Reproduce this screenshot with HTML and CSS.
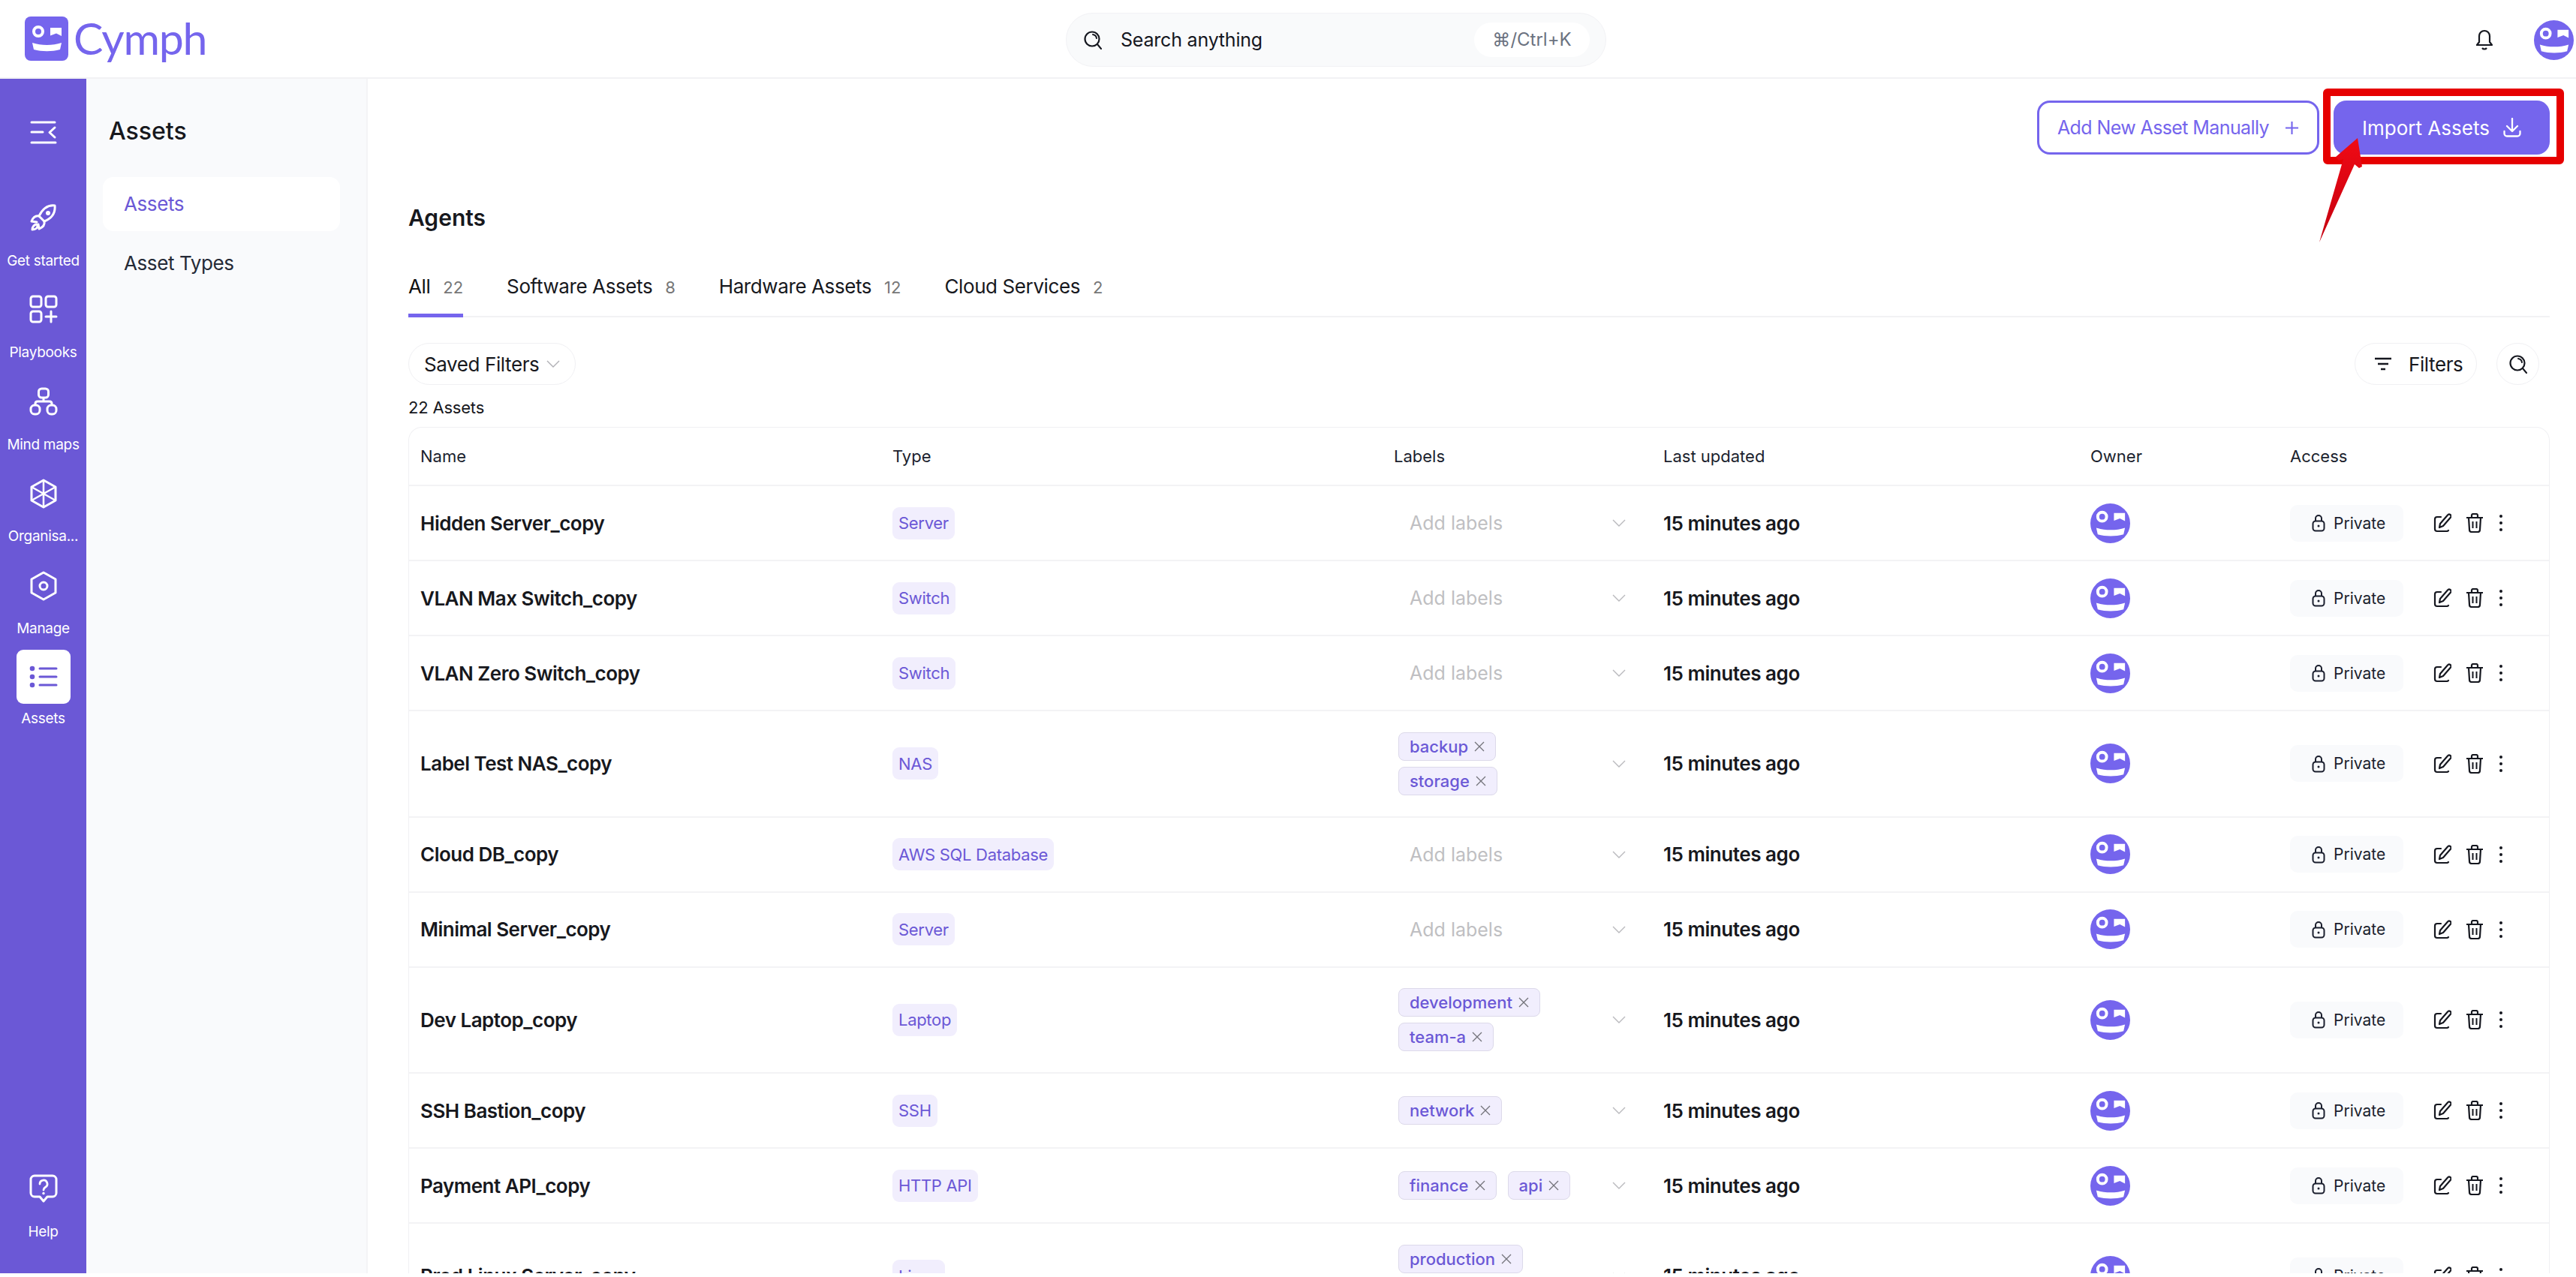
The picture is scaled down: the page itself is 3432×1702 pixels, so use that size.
FILE: index.html
```html
<!DOCTYPE html>
<html lang="en">
<head>
<meta charset="utf-8">
<title>Cymph Assets</title>
<link rel="stylesheet" href="styles.css">
</head>
<body>
<svg class="defs" width="0" height="0" aria-hidden="true">
  <symbol id="face" viewBox="0 0 54 54">
    <circle cx="16" cy="18" r="6" fill="none" stroke="#fff" stroke-width="4"/>
    <path d="M32 13h15v11l-7-3.5-8 3z" fill="#fff"/>
    <path d="M8 33c12 4 27 4 39 0l-2 9c-11 3-24 3-35 0z" fill="#fff"/>
  </symbol>
  <symbol id="i-search" viewBox="0 0 26 26">
    <circle cx="12" cy="12" r="9.5" fill="none" stroke="currentColor" stroke-width="2.2"/>
    <path d="M13 6a6 6 0 0 1 5 5M19 19l5 6" fill="none" stroke="currentColor" stroke-width="2" stroke-linecap="round"/>
  </symbol>
  <symbol id="i-chev" viewBox="0 0 18 10">
    <path d="M1 1l8 8 8-8" fill="none" stroke="currentColor" stroke-width="1.4"/>
  </symbol>
  <symbol id="i-x" viewBox="0 0 14 14">
    <path d="M1 1l12 12M13 1L1 13" fill="none" stroke="currentColor" stroke-width="1.3"/>
  </symbol>
  <symbol id="i-lock" viewBox="0 0 18 24">
    <rect x="1.5" y="9.5" width="15" height="13" rx="3.5" fill="none" stroke="currentColor" stroke-width="2"/>
    <path d="M5 9.5V6a4 4 0 0 1 8 0v3.500" fill="none" stroke="currentColor" stroke-width="2"/>
    <circle cx="9" cy="16" r="1.500" fill="currentColor"/>
  </symbol>
  <symbol id="i-edit" viewBox="0 0 24 26">
    <path d="M10 5H5a3 3 0 0 0-3 3v13a3 3 0 0 0 3 3h13a3 3 0 0 0 2-1" fill="none" stroke="currentColor" stroke-width="2.2" stroke-linecap="round"/>
    <path d="M8 19l1-5L19 2.500a2.500 2.500 0 0 1 4 3L13 17z" fill="none" stroke="currentColor" stroke-width="2.2" stroke-linejoin="round"/>
  </symbol>
  <symbol id="i-trash" viewBox="0 0 24 26">
    <path d="M1 6h22M4 6l1 16a3 3 0 0 0 3 3h8a3 3 0 0 0 3-3l1-16M8 6V3a2 2 0 0 1 2-2h4a2 2 0 0 1 2 2v3" fill="none" stroke="currentColor" stroke-width="2.2"/>
    <path d="M9.500 11v9M14.500 11v9" fill="none" stroke="currentColor" stroke-width="2"/>
  </symbol>
  <symbol id="i-dots" viewBox="0 0 6 26">
    <circle cx="3" cy="4" r="2" fill="currentColor"/>
    <circle cx="3" cy="13" r="2" fill="currentColor"/>
    <circle cx="3" cy="22" r="2" fill="currentColor"/>
  </symbol>
</svg>

<div class="app">
  <header class="topbar">
    <div class="brand">
      <svg class="brand-mark" viewBox="0 0 58 59"><rect width="58" height="59" rx="8" fill="#7565ed"/><use href="#face" x="2" y="2" width="54" height="54"/></svg>
      <span class="brand-name">Cymph</span>
    </div>
    <div class="search">
      <svg class="search-icon"><use href="#i-search"/></svg>
      <span class="search-text">Search anything</span>
      <span class="kbd">⌘/Ctrl+K</span>
    </div>
    <div class="top-right">
      <svg class="bell" viewBox="0 0 24 28"><path d="M12 2a7 7 0 0 0-7 7v8l-3 4h20l-3-4V9a7 7 0 0 0-7-7zM9 25c1.500 2 4.500 2 6 0" fill="none" stroke="#15171f" stroke-width="2.200" stroke-linejoin="round"/></svg>
      <svg class="avatar avatar-top" viewBox="0 0 54 54"><circle cx="27" cy="27" r="27" fill="#7565ed"/><use href="#face" width="54" height="54"/></svg>
    </div>
  </header>

  <div class="body">
    <nav class="rail">
      <svg class="rail-toggle" viewBox="0 0 40 40"><path d="M4 6h31M4 19h15M35 13l-7 6.500 7 6.500M4 33h32" fill="none" stroke="#fff" stroke-width="3" stroke-linecap="round" stroke-linejoin="round"/></svg>
      <a class="rail-item rail-first">
        <svg class="rail-icon" viewBox="0 0 38 38"><g fill="none" stroke="#fff" stroke-width="3" stroke-linejoin="round" stroke-linecap="round"><path d="M34 3c-9-1-16 4-21 14l7 7c10-4 15-11 14-21z"/><path d="M13 17c-5-1-8 2-10 7l7 1M20 24c1 5-2 8-7 10l-1-6"/><path d="M10 28c-3 0-6 3-6 7 4 0 7-2 7-5"/></g><circle cx="25" cy="13" r="3" fill="#fff"/></svg>
        <span>Get started</span>
      </a>
      <a class="rail-item">
        <svg class="rail-icon" viewBox="0 0 38 38"><g fill="none" stroke="#fff" stroke-width="3" stroke-linecap="round"><rect x="2" y="2" width="14" height="14" rx="3"/><rect x="22" y="2" width="14" height="14" rx="3"/><rect x="2" y="22" width="14" height="14" rx="3"/><path d="M29 22v14M22 29h14"/></g></svg>
        <span>Playbooks</span>
      </a>
      <a class="rail-item">
        <svg class="rail-icon" viewBox="0 0 38 38"><g fill="none" stroke="#fff" stroke-width="3"><rect x="12.500" y="2" width="13" height="12" rx="4"/><rect x="2" y="24" width="12" height="12" rx="5"/><rect x="24" y="24" width="12" height="12" rx="5"/><path d="M19 14v5M8 24v-2q0-3 3-3h16q3 0 3 3v2"/></g></svg>
        <span>Mind maps</span>
      </a>
      <a class="rail-item">
        <svg class="rail-icon rail-icon-hex" viewBox="0 0 38 40"><g fill="none" stroke="#fff" stroke-linejoin="round"><path stroke-width="3" d="M19 2l16 9v18l-16 9-16-9V11z"/><path stroke-width="2.500" d="M19 2v36M3 11l32 18M35 11L3 29"/></g></svg>
        <span>Organisa...</span>
      </a>
      <a class="rail-item">
        <svg class="rail-icon rail-icon-hex" viewBox="0 0 38 40"><g fill="none" stroke="#fff" stroke-width="3" stroke-linejoin="round"><path d="M19 2l16 9v18l-16 9-16-9V11z"/><circle cx="19" cy="20" r="5"/></g></svg>
        <span>Manage</span>
      </a>
      <a class="rail-item rail-active">
        <span class="rail-box"><svg viewBox="0 0 38 32" class="rail-list"><g fill="#6b58d6"><circle cx="4" cy="5" r="3.300"/><circle cx="4" cy="16" r="3.300"/><circle cx="4" cy="27" r="3.300"/></g><path d="M14 5h22M14 16h22M14 27h22" stroke="#6b58d6" stroke-width="3" stroke-linecap="round"/></svg></span>
        <span>Assets</span>
      </a>
      <a class="rail-item rail-help">
        <svg class="rail-icon" viewBox="0 0 38 38"><path d="M7 2h24a5 5 0 0 1 5 5v18a5 5 0 0 1-5 5h-7l-5 6-5-6H7a5 5 0 0 1-5-5V7a5 5 0 0 1 5-5z" fill="none" stroke="#fff" stroke-width="3" stroke-linejoin="round"/><path d="M14 13a5 5 0 1 1 7.500 4.300C20 18.200 19 19 19 21" fill="none" stroke="#fff" stroke-width="2.800" stroke-linecap="round"/><circle cx="19" cy="25.500" r="1.700" fill="#fff"/></svg>
        <span>Help</span>
      </a>
    </nav>

    <aside class="subnav">
      <h2 class="subnav-title">Assets</h2>
      <a class="subnav-item subnav-active">Assets</a>
      <a class="subnav-item">Asset Types</a>
    </aside>

    <main class="main">
      <div class="actions">
        <button class="btn btn-outline">Add New Asset Manually
          <svg class="btn-icon" viewBox="0 0 20 20"><path d="M10 1v18M1 10h18" fill="none" stroke="currentColor" stroke-width="2.200"/></svg>
        </button>
        <button class="btn btn-solid">Import Assets
          <svg class="btn-icon-dl" viewBox="0 0 24 26"><path d="M12 1v16M5 11l7 7 7-7M1.500 18v3a3.500 3.500 0 0 0 3.500 3.500h14a3.500 3.500 0 0 0 3.500-3.500v-3" fill="none" stroke="#fff" stroke-width="2.300" stroke-linecap="round" stroke-linejoin="round"/></svg>
        </button>
      </div>

      <h1 class="page-title">Agents</h1>

      <div class="tabs">
        <a class="tab tab-active">All <span class="count">22</span></a>
        <a class="tab">Software Assets <span class="count">8</span></a>
        <a class="tab">Hardware Assets <span class="count">12</span></a>
        <a class="tab">Cloud Services <span class="count">2</span></a>
      </div>

      <div class="filters">
        <button class="pill pill-saved">Saved Filters <svg class="chev-sm"><use href="#i-chev"/></svg></button>
        <div class="filters-right">
          <button class="pill pill-filter"><svg class="filter-icon" viewBox="0 0 24 18"><path d="M1 2h22M5 9h14M9 16h6" stroke="#15171f" stroke-width="2.400"/></svg>Filters</button>
          <button class="pill pill-search"><svg class="search-icon"><use href="#i-search"/></svg></button>
        </div>
      </div>

      <div class="total">22 Assets</div>

      <div class="table">
        <div class="row row-head">
          <div class="cell">Name</div><div class="cell">Type</div><div class="cell cell-labels-head">Labels</div><div class="cell">Last updated</div><div class="cell">Owner</div><div class="cell">Access</div>
        </div>

        <div class="row">
          <div class="cell name">Hidden Server_copy</div>
          <div class="cell"><span class="type">Server</span></div>
          <div class="cell labels"><div class="tags"><span class="placeholder">Add labels</span></div><svg class="chev"><use href="#i-chev"/></svg></div>
          <div class="cell time">15 minutes ago</div>
          <div class="cell"><svg class="avatar" viewBox="0 0 54 54"><circle cx="27" cy="27" r="27" fill="#7565ed"/><use href="#face" width="54" height="54"/></svg></div>
          <div class="cell access"><span class="private"><svg class="lock"><use href="#i-lock"/></svg>Private</span><svg class="act act-edit"><use href="#i-edit"/></svg><svg class="act act-trash"><use href="#i-trash"/></svg><svg class="act-dots"><use href="#i-dots"/></svg></div>
        </div>

        <div class="row">
          <div class="cell name">VLAN Max Switch_copy</div>
          <div class="cell"><span class="type">Switch</span></div>
          <div class="cell labels"><div class="tags"><span class="placeholder">Add labels</span></div><svg class="chev"><use href="#i-chev"/></svg></div>
          <div class="cell time">15 minutes ago</div>
          <div class="cell"><svg class="avatar" viewBox="0 0 54 54"><circle cx="27" cy="27" r="27" fill="#7565ed"/><use href="#face" width="54" height="54"/></svg></div>
          <div class="cell access"><span class="private"><svg class="lock"><use href="#i-lock"/></svg>Private</span><svg class="act act-edit"><use href="#i-edit"/></svg><svg class="act act-trash"><use href="#i-trash"/></svg><svg class="act-dots"><use href="#i-dots"/></svg></div>
        </div>

        <div class="row">
          <div class="cell name">VLAN Zero Switch_copy</div>
          <div class="cell"><span class="type">Switch</span></div>
          <div class="cell labels"><div class="tags"><span class="placeholder">Add labels</span></div><svg class="chev"><use href="#i-chev"/></svg></div>
          <div class="cell time">15 minutes ago</div>
          <div class="cell"><svg class="avatar" viewBox="0 0 54 54"><circle cx="27" cy="27" r="27" fill="#7565ed"/><use href="#face" width="54" height="54"/></svg></div>
          <div class="cell access"><span class="private"><svg class="lock"><use href="#i-lock"/></svg>Private</span><svg class="act act-edit"><use href="#i-edit"/></svg><svg class="act act-trash"><use href="#i-trash"/></svg><svg class="act-dots"><use href="#i-dots"/></svg></div>
        </div>

        <div class="row row-tall">
          <div class="cell name">Label Test NAS_copy</div>
          <div class="cell"><span class="type">NAS</span></div>
          <div class="cell labels"><div class="tags tags-stack"><span class="tag">backup <svg class="tag-x"><use href="#i-x"/></svg></span><span class="tag">storage <svg class="tag-x"><use href="#i-x"/></svg></span></div><svg class="chev"><use href="#i-chev"/></svg></div>
          <div class="cell time">15 minutes ago</div>
          <div class="cell"><svg class="avatar" viewBox="0 0 54 54"><circle cx="27" cy="27" r="27" fill="#7565ed"/><use href="#face" width="54" height="54"/></svg></div>
          <div class="cell access"><span class="private"><svg class="lock"><use href="#i-lock"/></svg>Private</span><svg class="act act-edit"><use href="#i-edit"/></svg><svg class="act act-trash"><use href="#i-trash"/></svg><svg class="act-dots"><use href="#i-dots"/></svg></div>
        </div>

        <div class="row">
          <div class="cell name">Cloud DB_copy</div>
          <div class="cell"><span class="type">AWS SQL Database</span></div>
          <div class="cell labels"><div class="tags"><span class="placeholder">Add labels</span></div><svg class="chev"><use href="#i-chev"/></svg></div>
          <div class="cell time">15 minutes ago</div>
          <div class="cell"><svg class="avatar" viewBox="0 0 54 54"><circle cx="27" cy="27" r="27" fill="#7565ed"/><use href="#face" width="54" height="54"/></svg></div>
          <div class="cell access"><span class="private"><svg class="lock"><use href="#i-lock"/></svg>Private</span><svg class="act act-edit"><use href="#i-edit"/></svg><svg class="act act-trash"><use href="#i-trash"/></svg><svg class="act-dots"><use href="#i-dots"/></svg></div>
        </div>

        <div class="row">
          <div class="cell name">Minimal Server_copy</div>
          <div class="cell"><span class="type">Server</span></div>
          <div class="cell labels"><div class="tags"><span class="placeholder">Add labels</span></div><svg class="chev"><use href="#i-chev"/></svg></div>
          <div class="cell time">15 minutes ago</div>
          <div class="cell"><svg class="avatar" viewBox="0 0 54 54"><circle cx="27" cy="27" r="27" fill="#7565ed"/><use href="#face" width="54" height="54"/></svg></div>
          <div class="cell access"><span class="private"><svg class="lock"><use href="#i-lock"/></svg>Private</span><svg class="act act-edit"><use href="#i-edit"/></svg><svg class="act act-trash"><use href="#i-trash"/></svg><svg class="act-dots"><use href="#i-dots"/></svg></div>
        </div>

        <div class="row row-tall">
          <div class="cell name">Dev Laptop_copy</div>
          <div class="cell"><span class="type">Laptop</span></div>
          <div class="cell labels"><div class="tags tags-stack"><span class="tag">development <svg class="tag-x"><use href="#i-x"/></svg></span><span class="tag">team-a <svg class="tag-x"><use href="#i-x"/></svg></span></div><svg class="chev"><use href="#i-chev"/></svg></div>
          <div class="cell time">15 minutes ago</div>
          <div class="cell"><svg class="avatar" viewBox="0 0 54 54"><circle cx="27" cy="27" r="27" fill="#7565ed"/><use href="#face" width="54" height="54"/></svg></div>
          <div class="cell access"><span class="private"><svg class="lock"><use href="#i-lock"/></svg>Private</span><svg class="act act-edit"><use href="#i-edit"/></svg><svg class="act act-trash"><use href="#i-trash"/></svg><svg class="act-dots"><use href="#i-dots"/></svg></div>
        </div>

        <div class="row">
          <div class="cell name">SSH Bastion_copy</div>
          <div class="cell"><span class="type">SSH</span></div>
          <div class="cell labels"><div class="tags"><span class="tag">network <svg class="tag-x"><use href="#i-x"/></svg></span></div><svg class="chev"><use href="#i-chev"/></svg></div>
          <div class="cell time">15 minutes ago</div>
          <div class="cell"><svg class="avatar" viewBox="0 0 54 54"><circle cx="27" cy="27" r="27" fill="#7565ed"/><use href="#face" width="54" height="54"/></svg></div>
          <div class="cell access"><span class="private"><svg class="lock"><use href="#i-lock"/></svg>Private</span><svg class="act act-edit"><use href="#i-edit"/></svg><svg class="act act-trash"><use href="#i-trash"/></svg><svg class="act-dots"><use href="#i-dots"/></svg></div>
        </div>

        <div class="row">
          <div class="cell name">Payment API_copy</div>
          <div class="cell"><span class="type">HTTP API</span></div>
          <div class="cell labels"><div class="tags tags-inline"><span class="tag">finance <svg class="tag-x"><use href="#i-x"/></svg></span><span class="tag">api <svg class="tag-x"><use href="#i-x"/></svg></span></div><svg class="chev"><use href="#i-chev"/></svg></div>
          <div class="cell time">15 minutes ago</div>
          <div class="cell"><svg class="avatar" viewBox="0 0 54 54"><circle cx="27" cy="27" r="27" fill="#7565ed"/><use href="#face" width="54" height="54"/></svg></div>
          <div class="cell access"><span class="private"><svg class="lock"><use href="#i-lock"/></svg>Private</span><svg class="act act-edit"><use href="#i-edit"/></svg><svg class="act act-trash"><use href="#i-trash"/></svg><svg class="act-dots"><use href="#i-dots"/></svg></div>
        </div>

        <div class="row row-tall">
          <div class="cell name">Prod Linux Server_copy</div>
          <div class="cell"><span class="type">Linux</span></div>
          <div class="cell labels"><div class="tags tags-stack"><span class="tag">production <svg class="tag-x"><use href="#i-x"/></svg></span><span class="tag">linux <svg class="tag-x"><use href="#i-x"/></svg></span></div><svg class="chev"><use href="#i-chev"/></svg></div>
          <div class="cell time">15 minutes ago</div>
          <div class="cell"><svg class="avatar" viewBox="0 0 54 54"><circle cx="27" cy="27" r="27" fill="#7565ed"/><use href="#face" width="54" height="54"/></svg></div>
          <div class="cell access"><span class="private"><svg class="lock"><use href="#i-lock"/></svg>Private</span><svg class="act act-edit"><use href="#i-edit"/></svg><svg class="act act-trash"><use href="#i-trash"/></svg><svg class="act-dots"><use href="#i-dots"/></svg></div>
        </div>
      </div>
    </main>
  </div>

  <svg class="annotation" viewBox="3085 110 340 220">
    <defs><linearGradient id="arrow-fill" x1="0" y1="0" x2="0" y2="1"><stop offset="0" stop-color="#f00a14"/><stop offset="1" stop-color="#c40010"/></linearGradient></defs>
    <rect x="3100" y="123" width="311" height="91" rx="1" fill="none" stroke="#e60000" stroke-width="10"/>
    <polygon points="3141,184 3147,222 3143,224 3137,219 3090,323 3122,212 3116,214 3112,209" fill="url(#arrow-fill)"/>
  </svg>
</div>
</body>
</html>
```

FILE: styles.css
```css
* { box-sizing: border-box; }
html, body { margin: 0; padding: 0; background: #fff; }
body { font-family: "Inter", "Liberation Sans", sans-serif; color: #17181d; }
.defs { position: absolute; }
a { display: block; }
button { font-family: inherit; cursor: pointer; }

.app { position: relative; width: 3432px; height: 1697px; overflow: hidden; display: flex; flex-direction: column; }

/* top bar */
.topbar { flex: 0 0 105px; height: 105px; display: grid; grid-template-columns: 1420px 720px 1fr; align-items: center; border-bottom: 2px solid #f2f2f4; }
.brand { display: flex; align-items: center; padding-left: 33px; gap: 7px; margin-top: -1px; }
.brand-mark { width: 58px; height: 59px; }
.brand-name { font-size: 59px; color: #7565ed; letter-spacing: -1.200px; line-height: 60px; font-family: "Lato", "Inter", sans-serif; }
.search { height: 72px; margin-top: 2px; display: flex; align-items: center; background: #f9fafb; border: 1px solid #f2f2f5; border-radius: 36px; padding: 0 21px 0 22px; }
.search-icon { width: 26px; height: 26px; color: #15171f; flex: none; }
.search-text { font-size: 25px; margin-left: 24px; color: #15171f; flex: 1; letter-spacing: -.2px; }
.kbd { width: 154px; height: 46px; background: #fff; border-radius: 23px; color: #6b7280; font-size: 24px; display: flex; align-items: center; justify-content: center; }
.top-right { display: flex; justify-content: flex-end; align-items: center; padding-right: 3px; gap: 54px; margin-top: 2px; }
.bell { width: 24px; height: 28px; }
.avatar { width: 53px; height: 53px; display: block; }
.avatar-top { margin-top: 1px; }

.body { flex: 1; display: flex; min-height: 0; }

/* rail */
.rail { flex: 0 0 115px; background: #6b58d6; display: flex; flex-direction: column; align-items: center; padding-top: 52px; color: #fff; }
.rail-toggle { width: 40px; height: 40px; flex: none; }
.rail-item { width: 115px; height: 122.400px; flex: none; display: flex; flex-direction: column; align-items: center; font-size: 19px; letter-spacing: -.3px; color: #fff; white-space: nowrap; }
.rail-first { margin-top: 74px; }
.rail-icon { width: 38px; height: 38px; flex: none; margin-bottom: 27px; }
.rail-icon-hex { height: 40px; margin-bottom: 25px; }
.rail-active { margin-top: -32px; height: 106px; padding-top: 15px; }
.rail-box { width: 72px; height: 72px; flex: none; background: #fff; border-radius: 9px; display: flex; align-items: center; justify-content: center; margin-bottom: 8px; }
.rail-list { width: 38px; height: 32px; }
.rail-help { margin-top: auto; height: 132px; }

/* secondary nav */
.subnav { flex: 0 0 375px; background: #f9fafc; border-right: 2px solid #f4f4f6; padding: 0 22px; }
.subnav-title { margin: 49px 0 40px 8px; font-size: 32px; line-height: 42px; font-weight: 500; color: #17181d; }
.subnav-item { height: 72px; padding-left: 28px; font-size: 26px; line-height: 72px; letter-spacing: -.4px; color: #252a37; border-radius: 14px; margin-bottom: 7px; width: 316px; }
.subnav-active { background: #fff; color: #6b58d6; }

/* main */
.main { flex: 1; min-width: 0; padding: 29px 35px 0 54px; overflow: hidden; }
.actions { display: flex; justify-content: flex-end; gap: 19px; height: 72px; }
.btn { height: 72px; border-radius: 17px; font-size: 26px; display: flex; align-items: center; justify-content: center; white-space: nowrap; }
.btn-outline { width: 376px; background: #fff; border: 3px solid #7565ed; color: #7565ed; gap: 21px; padding: 0; font-size: 25px; letter-spacing: -.6px; }
.btn-solid { width: 288px; background: #7565ed; border: 0; color: #fff; gap: 18px; }
.btn-icon { width: 19px; height: 19px; }
.btn-icon-dl { width: 24px; height: 26px; }

.page-title { margin: 64px 0 0; font-size: 30px; line-height: 40px; font-weight: 600; color: #17181d; }

.tabs { margin-top: 40px; height: 73px; display: flex; gap: 58px; border-bottom: 2px solid #f2f2f4; }
.tab { height: 73px; font-size: 26px; line-height: 64px; letter-spacing: -.4px; color: #17181d; white-space: nowrap; }
.tab-active { border-bottom: 5px solid #7565ed; color: #111; }
.count { color: #777; font-size: 22px; margin-left: 10px; letter-spacing: 0; }

.filters { margin-top: 34px; height: 55px; display: flex; justify-content: space-between; padding-right: 14px; }
.filters-right { display: flex; gap: 26px; }
.pill { height: 56px; background: #fff; border: 1px solid #f0f0f3; border-radius: 28px; font-size: 26px; letter-spacing: -.4px; color: #17181d; display: flex; align-items: center; padding: 0; white-space: nowrap; }
.pill-saved { width: 223px; padding-left: 20px; gap: 10px; }
.chev-sm { width: 18px; height: 10px; color: #b0b0b5; flex: none; }
.pill-filter { width: 163px; padding-left: 25px; gap: 22px; }
.filter-icon { width: 24px; height: 18px; }
.pill-search { width: 57px; justify-content: center; }

.total { margin-top: 19px; font-size: 22px; line-height: 24px; letter-spacing: -.2px; color: #17181d; }

.table { margin-top: 14px; border: 1px solid #f0f0f3; border-bottom: 0; border-radius: 18px 18px 0 0; }
.row { display: grid; grid-template-columns: 628px 668px 359px 569px 266px 1fr; align-items: center; height: 100px; border-bottom: 2px solid #f3f3f5; }
.row-head { height: 78px; font-size: 22px; color: #1b1f2e; }
.row-tall { height: 141.500px; }
.cell { padding-left: 16px; min-width: 0; }
.row > .cell:first-child { padding-left: 15px; }
.name { font-size: 26px; font-weight: 600; letter-spacing: -.5px; color: #17181d; white-space: nowrap; }
.time { font-size: 26px; font-weight: 600; letter-spacing: -.45px; color: #17181d; white-space: nowrap; }
.type { display: inline-flex; align-items: center; height: 43px; padding: 0 8px; background: #f1eefd; border-radius: 9px; color: #6b58d6; font-size: 22px; letter-spacing: -.3px; white-space: nowrap; }

.labels { display: flex; align-items: center; justify-content: space-between; padding: 0 34px 0 22px; }
.cell-labels-head { padding-left: 16px; }
.tags { display: flex; }
.tags-stack { flex-direction: column; align-items: flex-start; gap: 8px; }
.tags-inline { gap: 15px; }
.placeholder { font-size: 25px; color: #bfbfc2; padding-left: 15px; }
.tag { display: inline-flex; align-items: center; gap: 8px; height: 38px; padding: 0 14px; background: #f1eefd; border: 1px solid #dcd9ea; border-radius: 8px; color: #6b58d6; font-size: 22px; font-weight: 500; white-space: nowrap; }
.tag-x { width: 14px; height: 14px; color: #73737a; flex: none; }
.chev { width: 18px; height: 10px; color: #b9b9bd; flex: none; }

.access { display: flex; align-items: center; }
.private { width: 151px; height: 49px; background: #f9fafc; border-radius: 10px; font-size: 21px; color: #1b1f2e; display: flex; align-items: center; padding-left: 29px; gap: 11px; }
.lock { width: 18px; height: 24px; color: #1b1f2e; }
.act { width: 24px; height: 26px; color: #15171f; flex: none; }
.act-edit { margin-left: 40px; }
.act-trash { margin-left: 19px; }
.act-dots { width: 6px; height: 26px; margin-left: 20px; color: #15171f; flex: none; }

.annotation { position: absolute; left: 3085px; top: 110px; width: 340px; height: 220px; pointer-events: none; }
```
